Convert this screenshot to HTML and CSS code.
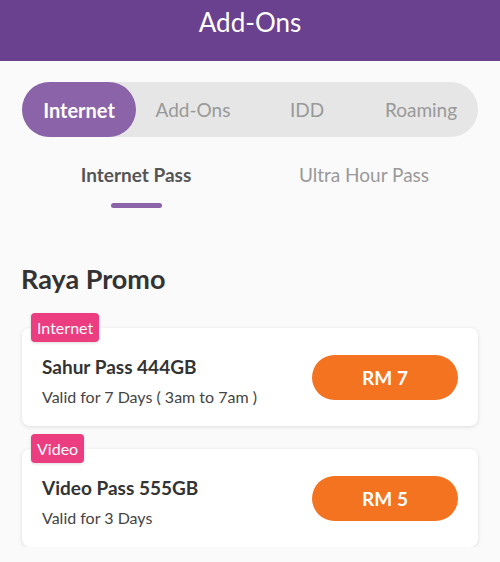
FILE: index.html
```html
<!DOCTYPE html>
<html lang="en">
<head>
  <meta charset="UTF-8" />
  <meta name="viewport" content="width=device-width, initial-scale=1.0"/>
  <title>Add-Ons</title>
  <link rel="stylesheet" href="styles.css">
</head>
<body>
  <header class="topbar">Add-Ons</header>

  <main class="content">
    <nav class="segments">
      <span class="seg active">Internet</span>
      <span class="seg">Add-Ons</span>
      <span class="seg">IDD</span>
      <span class="seg">Roaming</span>
    </nav>

    <div class="subtabs">
      <div class="subtab active">Internet Pass<span class="bar"></span></div>
      <div class="subtab">Ultra Hour Pass</div>
    </div>

    <h2 class="section-title">Raya Promo</h2>

    <div class="cards">
      <div class="card">
        <span class="tag">Internet</span>
        <div class="info">
          <div class="name">Sahur Pass 444GB</div>
          <div class="valid">Valid for 7 Days ( 3am to 7am )</div>
        </div>
        <button class="price">RM 7</button>
      </div>

      <div class="card">
        <span class="tag">Video</span>
        <div class="info">
          <div class="name">Video Pass 555GB</div>
          <div class="valid">Valid for 3 Days</div>
        </div>
        <button class="price">RM 5</button>
      </div>
    </div>
  </main>
</body>
</html>
```

FILE: styles.css
```css
* { margin: 0; padding: 0; box-sizing: border-box; }
body {
  font-family: 'Lato', 'Open Sans', sans-serif;
  background: #fafafa;
  color: #333;
  overflow: hidden;
}
.topbar {
  height: 61px;
  background: #6a418f;
  color: #fff;
  font-size: 26px;
  text-align: center;
  line-height: 44px;
}
.content {
  padding: 21px 22px 0;
}
.segments {
  display: flex;
  height: 55px;
  background: #e6e6e6;
  border-radius: 28px;
}
.seg {
  flex: 1;
  display: flex;
  align-items: center;
  justify-content: center;
  font-size: 19px;
  color: #999;
  border-radius: 28px;
}
.seg.active {
  background: #8a63a8;
  color: #fff;
  font-weight: bold;
  font-size: 20px;
}

.subtabs {
  display: flex;
  margin-top: 24px;
}
.subtab {
  flex: 1;
  display: flex;
  flex-direction: column;
  align-items: center;
  font-size: 19px;
  line-height: 28px;
  color: #999;
}
.subtab.active {
  color: #555;
  font-weight: bold;
}
.subtab .bar {
  width: 51px;
  height: 5px;
  border-radius: 3px;
  background: #8a63a8;
  margin-top: 14px;
}

.section-title {
  font-size: 27px;
  font-weight: bold;
  color: #333;
  margin: 55px 0 0 -1px;
  line-height: 32px;
}

.cards {
  display: flex;
  flex-direction: column;
  gap: 23px;
  margin-top: 33px;
}
.card {
  position: relative;
  display: flex;
  align-items: center;
  justify-content: space-between;
  height: 98px;
  padding: 9px 20px 0;
  background: #fff;
  border-radius: 8px;
  box-shadow: 0 1px 4px rgba(0, 0, 0, 0.12);
}
.tag {
  position: absolute;
  top: -15px;
  left: 9px;
  height: 29px;
  padding: 0 6px;
  background: #eb3d80;
  color: #fff;
  font-size: 16px;
  line-height: 29px;
  border-radius: 4px;
  box-shadow: 0 1px 3px rgba(0, 0, 0, 0.15);
}
.name {
  font-size: 19px;
  font-weight: bold;
  line-height: 24px;
  color: #333;
}
.valid {
  font-size: 16px;
  line-height: 22px;
  margin-top: 7px;
  color: #444;
}
.price {
  width: 146px;
  height: 45px;
  margin-top: -9px;
  border: none;
  border-radius: 23px;
  background: #f37321;
  color: #fff;
  font-family: inherit;
  font-size: 19px;
  font-weight: bold;
}
```
